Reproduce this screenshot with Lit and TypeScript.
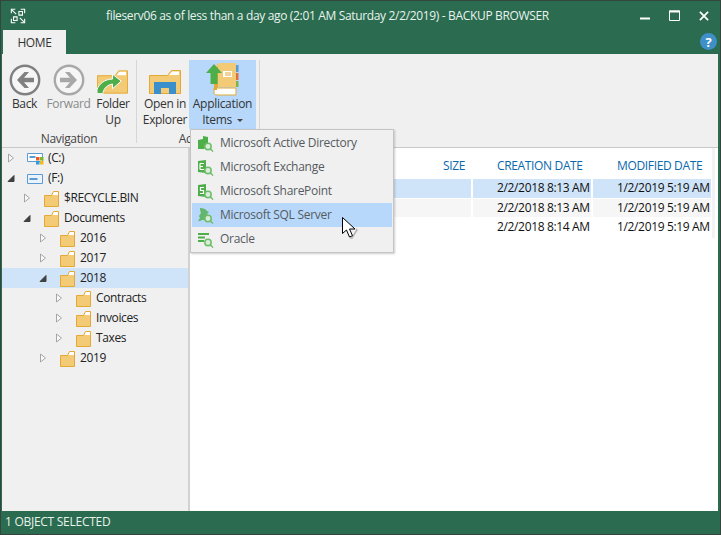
import { LitElement, html, css, svg } from "lit";
import { customElement } from "lit/decorators.js";

const folder = svg`<svg width="17" height="17" viewBox="0 0 17 17"><path d="M1.500 5.500h7l2-4h5v15h-14z" fill="#f3ca75"/><path d="M10.500 1.500h5v3.500h-6.700z" fill="#fff"/><path d="M1.500 5.500h7l2-4h5v15h-14z" fill="none" stroke="#e3a935"/></svg>`;

const arrowOpen = svg`<svg width="8" height="10" viewBox="0 0 8 10"><path d="M1 8.500L7 2.500V8.500z" fill="#404040" stroke="#404040"/></svg>`;
const arrowClosed = svg`<svg width="8" height="10" viewBox="0 0 8 10"><path d="M1.500 1L6.500 5L1.500 9z" fill="#fff" fill-opacity=".6" stroke="#a6a6a6"/></svg>`;

const driveC = svg`<svg width="17" height="13" viewBox="0 0 17 13"><path d="M.5 1.500h15v8h-15z" fill="#fff" stroke="#5b9bd5"/><path d="M2.500 4h6v2h-6z" fill="#5b9bd5"/><path d="M9 5h3.500v3.500H9z" fill="#e8562a"/><path d="M13 5h3.500v3.500H13z" fill="#7fb92e"/><path d="M9 9h3.500v3.500H9z" fill="#2a9fe0"/><path d="M13 9h3.500v3.500H13z" fill="#f7b917"/></svg>`;
const driveF = svg`<svg width="17" height="13" viewBox="0 0 17 13"><path d="M.5 2.500h15v9h-15z" fill="#eaf3fb" stroke="#5b9bd5"/><path d="M2.500 6h8v2h-8z" fill="#5b9bd5"/></svg>`;

const backIcon = (c: string, rev: boolean) => svg`<svg width="32" height="32" viewBox="0 0 32 32"><circle cx="16" cy="16" r="14.200" fill="#f6f6f6" stroke="${c}" stroke-width="2.400"/><g transform="${rev ? "matrix(-1 0 0 1 32 0)" : ""}"><path d="M15.500 8L8 16l7.500 8h4.500l-5-5.800H25v-4.400H15l5-5.800z" fill="${c}"/></g></svg>`;

const folderUp = svg`<svg class="fu" width="31" height="28" viewBox="0 0 32 28"><path d="M.5 7.500h18l4-5h9v23H.5z" fill="#f3ca75" stroke="#e3a935"/><path d="M20 7l3-3.500h7V7z" fill="#fff"/><path d="M0 25h6c1-6 5-9 10-10v5l9-8-9-7v5C8 10 2 15 0 21z" transform="translate(0 1)" fill="#4eae4a" stroke="#fff" stroke-width="1"/></svg>`;

const explorer = svg`<svg width="32" height="28" viewBox="0 0 32 28"><path d="M.5 7.500h18l4-5h9v23H.5z" fill="#f3ca75" stroke="#e3a935"/><path d="M20 7l3-3.500h7V7z" fill="#fff"/><path d="M5 26V14h22v12h-7v-6h-8v6z" fill="#3b8fcb"/></svg>`;

const book = svg`<svg width="36" height="34" viewBox="0 0 36 34"><path d="M9 26h22v7H12c-2 0-3-1-3-3z" fill="#fff" stroke="#e3a935"/><path d="M9 28V25l3-1v4z" fill="#e3a935"/><path d="M9 28c0-2 1-3 3-3h19V1H14l-5 4z" fill="#f3ca75"/><path d="M9 28V5h4v20c-2 0-4 1-4 3z" fill="#e3a935"/><path d="M18 9h9v6h-9z" fill="#fff"/><path d="M20 11h6M20 13h6" stroke="#e3a935"/><path d="M31 3h2.500v7H31z" fill="#5b9bd5"/><path d="M31 11h2.500v7H31z" fill="#e0703a"/><path d="M31 19h2.500v6H31z" fill="#7fb34a"/><path d="M9 2L1 11h4.500v11h7V11H17z" fill="#4eae4a"/></svg>`;

const lens = svg`<circle cx="11" cy="11.500" r="3.200" fill="#d8ecd6" stroke="#6ebd6a" stroke-width="1.500"/><path d="M13.500 14l2.500 2.500" stroke="#6ebd6a" stroke-width="1.500"/>`;
const g = "#4eae4a";
const icons = [
  svg`<path d="M1 5l5-1V1l5 1v6L7 14H1z" fill="${g}"/>${lens}`,
  svg`<path d="M1 2l8-1v13l-8-1z" fill="${g}"/><path d="M3 4.500h4M3 7.500h3M3 10.500h4M3 4.500v6" stroke="#fff" stroke-width="1.200" fill="none"/>${lens}`,
  svg`<path d="M1 2l8-1v13l-8-1z" fill="${g}"/><path d="M7 4.500H3.500v3H6.500v3H3" stroke="#fff" stroke-width="1.200" fill="none"/>${lens}`,
  svg`<path d="M3 1c3 0 6 1 7 3l2 1-2 2 2 2-3 1 1 3H5L3 14H1l2-3-1-2 2-3-1-3z" fill="${g}" opacity=".8"/>${lens}`,
  svg`<path d="M1 3h11M1 6.500h7M1 10h6" stroke="${g}" stroke-width="2"/>${lens}`,
];

const tree = [
  { l: 0, t: "(C:)", a: 0, i: driveC },
  { l: 0, t: "(F:)", a: 1, i: driveF },
  { l: 1, t: "$RECYCLE.BIN", a: 0 },
  { l: 1, t: "Documents", a: 1 },
  { l: 2, t: "2016", a: 0 },
  { l: 2, t: "2017", a: 0 },
  { l: 2, t: "2018", a: 1, sel: true },
  { l: 3, t: "Contracts", a: 0 },
  { l: 3, t: "Invoices", a: 0 },
  { l: 3, t: "Taxes", a: 0 },
  { l: 2, t: "2019", a: 0 },
] as { l: number; t: string; a: number; i?: unknown; sel?: boolean }[];

const rows = [
  ["sel", "2/2/2018 8:13 AM", "1/2/2019 5:19 AM"],
  ["alt", "2/2/2018 8:13 AM", "1/2/2019 5:19 AM"],
  ["", "2/2/2018 8:14 AM", "1/2/2019 5:19 AM"],
];

const menu = ["Microsoft Active Directory", "Microsoft Exchange", "Microsoft SharePoint", "Microsoft SQL Server", "Oracle"];

@customElement("app-root")
export class AppRoot extends LitElement {
  static styles = css`
    :host { display: block; width: 721px; height: 535px; font-family: "Open Sans", "Noto Sans", sans-serif; font-size: 12px; letter-spacing: -0.35px; color: #222; }
    .window { position: relative; width: 721px; height: 535px; box-sizing: border-box; background: #2b6b4f; border: 1px solid #33453d; padding: 0 1px 1px 1px; display: flex; flex-direction: column; overflow: hidden; }
    .title { height: 29px; display: flex; align-items: center; color: #e8f3ee; flex: none; padding: 0 10px 0 8px; }
    .logo { flex: none; display: block; }
    .title-text { margin-left: 80px; flex: 1; white-space: nowrap; letter-spacing: -0.34px; }
    .winbtns { display: flex; align-items: center; gap: 19px; }
    .winbtns svg { display: block; }
    .tabs { height: 24px; flex: none; display: flex; align-items: flex-end; justify-content: space-between; padding: 0 2px 0 1px; }
    .tab { width: 63px; height: 24px; background: #f0f0f0; display: flex; align-items: center; justify-content: center; color: #333; }
    .help { width: 17px; height: 17px; border-radius: 50%; background: #3f8fc9; color: #fff; font-weight: 700; font-size: 13px; letter-spacing: 0; display: flex; align-items: center; justify-content: center; margin-bottom: 4px; }
    .ribbon { height: 93px; flex: none; background: #f0f0f0; border-bottom: 1px solid #c9c9c9; display: flex; margin-right: 1px; }
    .group { display: flex; flex-direction: column; border-right: 1px solid #d6d6d6; margin: 6px 0 4px; }
    .group.nav { width: 134px; }
    .group.act { width: 122px; }
    .btns { display: flex; height: 69px; flex: none; }
    .btn { display: flex; flex-direction: column; align-items: center; color: #333; line-height: 16px; text-align: center; box-sizing: border-box; }
    .ic { height: 36px; display: flex; align-items: flex-end; justify-content: center; flex: none; }
    .ic svg { display: block; }
    .ic .fu { margin-right: 2px; }
    .btn.dis { color: #8a8a8a; }
    .btn.hot { background: #b7d8fa; letter-spacing: -0.3px; width: 67px; }
    .btn.w45 { width: 45px; }
    .btn.w43 { width: 43px; }
    .btn.w46 { width: 46px; }
    .btn.open { width: 52px; padding-left: 4px; }
    .caret { display: inline-block; width: 0; height: 0; border: 3px solid transparent; border-top-color: #444; border-bottom: 0; vertical-align: 2px; margin-left: 2px; }
    .glabel { text-align: center; color: #444; margin-top: 2px; line-height: 16px; }
    .main { flex: 1; display: flex; min-height: 0; margin-right: 1px; }
    .tree { width: 186px; flex: none; background: #f0f0f0; border-right: 2px solid #d2d2d2; }
    .node { height: 20px; display: flex; align-items: center; color: #222; box-sizing: border-box; letter-spacing: -0.38px; }
    .node.sel { background: #cfe4f9; }
    .exp { width: 8px; height: 10px; margin-left: 5px; margin-right: 12px; flex: none; display: flex; }
    .ico { width: 17px; height: 17px; display: flex; align-items: center; flex: none; margin-right: 4px; }
    .ico svg, .exp svg { display: block; }
    .t { margin-bottom: 2px; }
    .content { flex: 1; background: #fff; min-width: 0; }
    .table { width: 522px; height: 90px; border-right: 3px solid #f3f3f3; display: flex; flex-direction: column; }
    .head { height: 31px; flex: none; display: grid; grid-template-columns: 283px 120px 114px; color: #0a68ad; line-height: 36px; }
    .head .size { text-align: right; padding-right: 8px; }
    .head .c { padding-left: 24px; white-space: nowrap; }
    .row { display: grid; grid-template-columns: 281px 118px 118px; column-gap: 2px; height: 19px; margin-bottom: 1px; line-height: 18px; color: #111; }
    .row div { padding-left: 24px; white-space: nowrap; }
    .row.sel div { background: #cfe4f9; }
    .row.alt div { background: #f6f6f6; }
    .status { height: 22px; flex: none; color: #e8f3ee; display: flex; align-items: center; padding: 0 0 2px 3px; box-sizing: border-box; letter-spacing: -0.27px; }
    .menu { position: absolute; left: 189px; top: 128px; width: 204px; height: 124px; box-sizing: border-box; background: #f0f0f0; border: 1px solid #c4c4c4; box-shadow: 1px 1px 2px rgba(0,0,0,.2); padding: 1px; z-index: 5; letter-spacing: -0.28px; }
    .mi { height: 24px; display: flex; align-items: center; color: #555b60; }
    .mi span { margin-bottom: 2px; }
    .mi.hot { background: #b7d8fa; }
    .mi svg { margin: 0 6px 0 5px; display: block; flex: none; }
    .cursor { position: absolute; left: 340px; top: 215px; z-index: 6; display: block; }
  `;

  render() {
    return html`<div class="window">
      <div class="title">
        <svg class="logo" width="16" height="16" viewBox="0 0 18 18" fill="none" stroke="#fff" stroke-width="1.200"><path d="M1.500 6V1.500H6M12 1.500h4.500V6M1.500 12v4.500H6M12 16.500h4.500V12"/><path d="M10 4h4v4h-4zM4 10h4v4H4z"/><path d="M2 2l5 5M16 16l-5-5"/></svg>
        <div class="title-text">fileserv06 as of less than a day ago (2:01 AM Saturday 2/2/2019) - BACKUP BROWSER</div>
        <div class="winbtns">
          <svg width="10" height="10" viewBox="0 0 10 10"><path d="M0 7.500h10" stroke="#fff" stroke-width="2"/></svg>
          <svg width="11" height="11" viewBox="0 0 11 11" fill="none" stroke="#fff"><path d="M.5 1h10v9.500H.5z"/><path d="M0 1.500h11" stroke-width="2"/></svg>
          <svg width="10" height="10" viewBox="0 0 11 11" fill="none" stroke="#fff" stroke-width="2"><path d="M1 1l9 9M10 1l-9 9"/></svg>
        </div>
      </div>
      <div class="tabs"><div class="tab">HOME</div><div class="help">?</div></div>
      <div class="ribbon">
        <div class="group nav">
          <div class="btns">
            <div class="btn w45"><div class="ic">${backIcon("#808080", false)}</div><div>Back</div></div>
            <div class="btn dis w43"><div class="ic">${backIcon("#a8a8a8", true)}</div><div>Forward</div></div>
            <div class="btn w46"><div class="ic">${folderUp}</div><div>Folder<br />Up</div></div>
          </div>
          <div class="glabel">Navigation</div>
        </div>
        <div class="group act">
          <div class="btns">
            <div class="btn open"><div class="ic">${explorer}</div><div>Open in<br />Explorer</div></div>
            <div class="btn hot"><div class="ic">${book}</div><div>Application<br />Items <span class="caret"></span></div></div>
          </div>
          <div class="glabel">Actions</div>
        </div>
      </div>
      <div class="main">
        <div class="tree">
          ${tree.map(
            (n) => html`<div class="node ${n.sel ? "sel" : ""}" style="padding-left:${n.l * 16}px">
              <span class="exp">${n.a ? arrowOpen : arrowClosed}</span>
              <span class="ico">${n.i ?? folder}</span>
              <span class="t">${n.t}</span>
            </div>`
          )}
        </div>
        <div class="content">
          <div class="table">
            <div class="head"><div class="size">SIZE</div><div class="c">CREATION DATE</div><div class="c">MODIFIED DATE</div></div>
            ${rows.map((r) => html`<div class="row ${r[0]}"><div></div><div>${r[1]}</div><div>${r[2]}</div></div>`)}
          </div>
        </div>
      </div>
      <div class="status">1 OBJECT SELECTED</div>
      <div class="menu">
        ${menu.map(
          (m, i) => html`<div class="mi ${i === 3 ? "hot" : ""}"><svg width="17" height="17" viewBox="0 0 17 17">${icons[i]}</svg><span>${m}</span></div>`
        )}
      </div>
      <svg class="cursor" width="18" height="24" viewBox="0 0 18 24"><path d="M1.500 1.500v16l4-3.500 3 7 3-1.300-3-6.700h5.500z" fill="#fff" stroke="#000"/><path d="M15 13l1 1-5 8-2 0" fill="none" stroke="#000" stroke-opacity=".25" stroke-width="1.500"/></svg>
    </div>`;
  }
}
